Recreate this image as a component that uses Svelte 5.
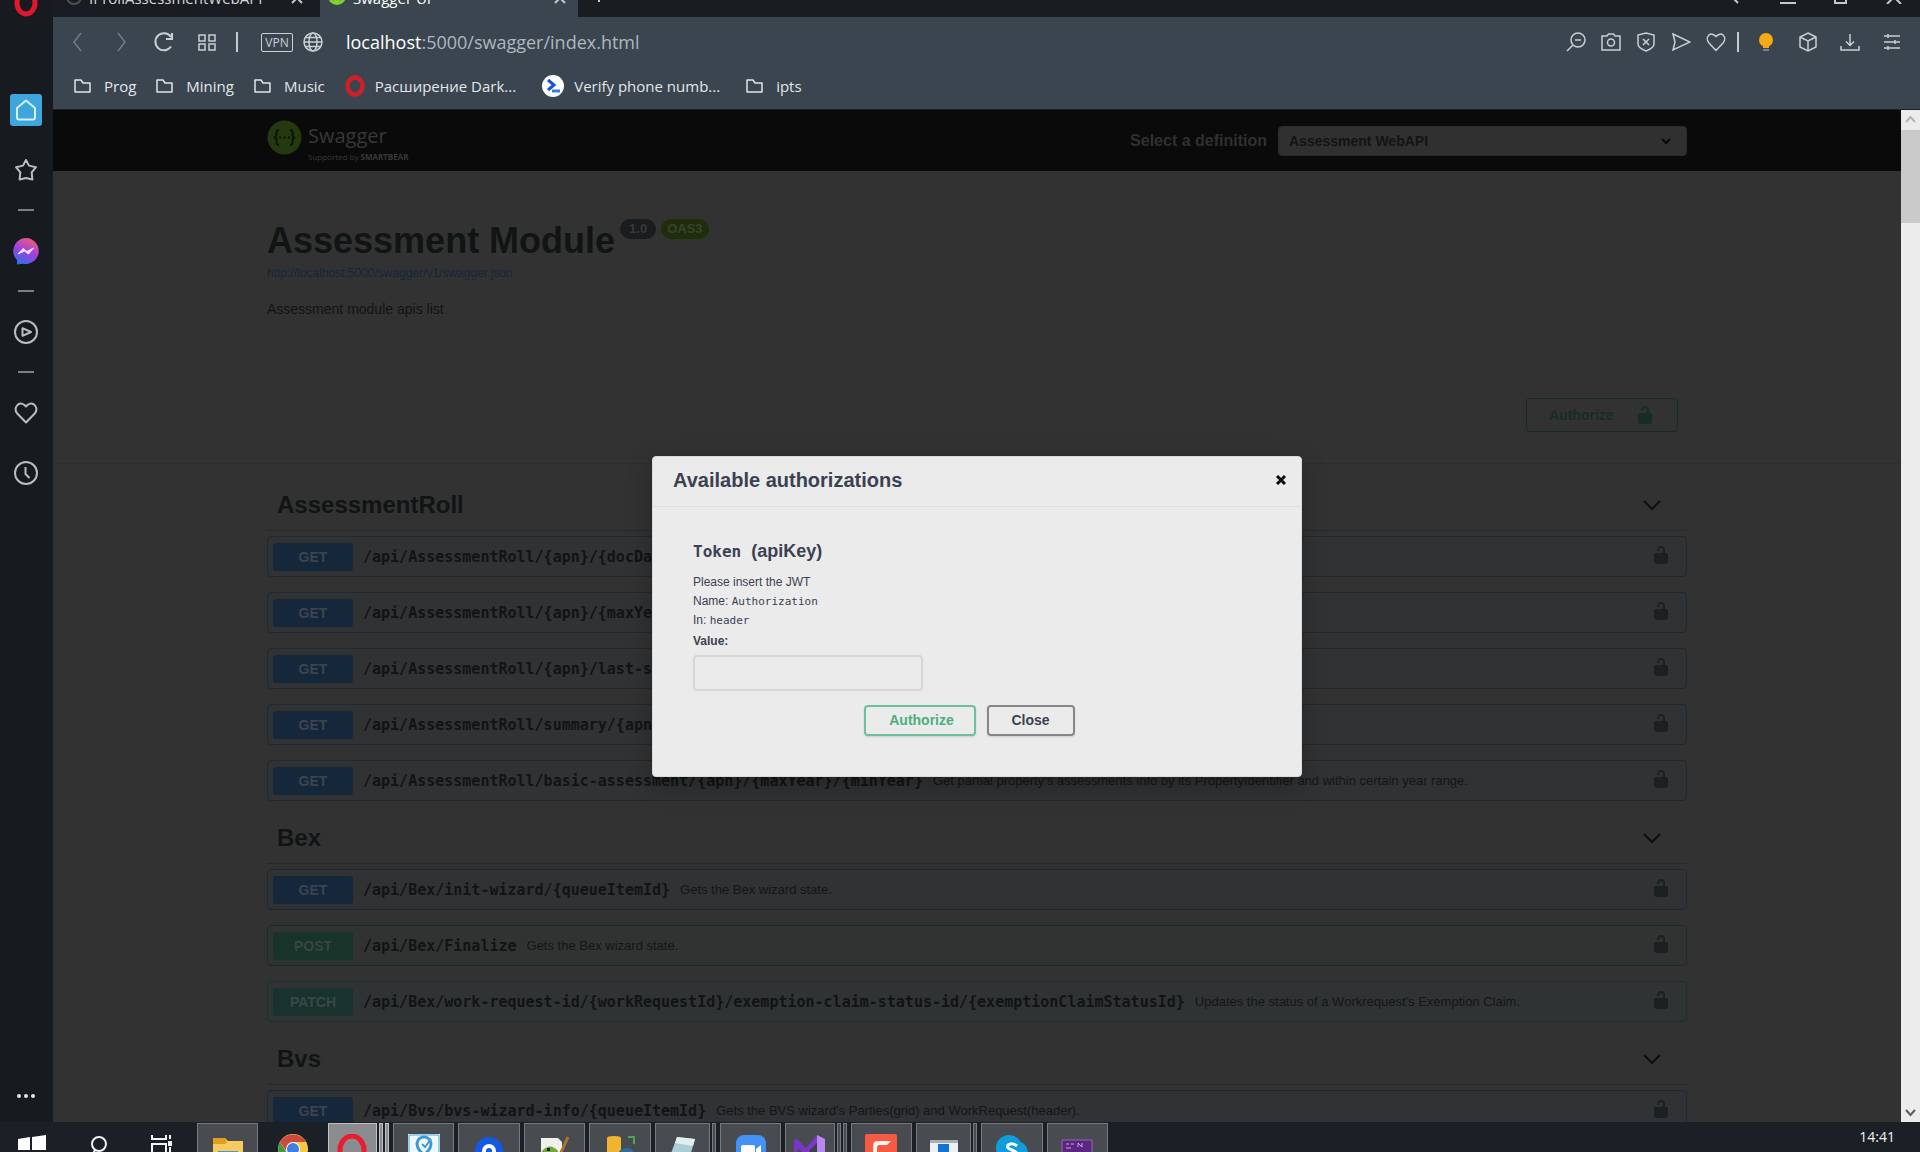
<script>
  const sections = [
    {
      name: 'AssessmentRoll',
      ops: [
        { method: 'get', path: '/api/AssessmentRoll/{apn}/{docDate}', text: '' },
        { method: 'get', path: '/api/AssessmentRoll/{apn}/{maxYear}', text: '' },
        { method: 'get', path: '/api/AssessmentRoll/{apn}/last-summary', text: '' },
        { method: 'get', path: '/api/AssessmentRoll/summary/{apn}', text: '' },
        {
          method: 'get',
          path: '/api/AssessmentRoll/basic-assessment/{apn}/{maxYear}/{minYear}',
          text: "Get partial property's assessments info by its PropertyIdentifier and within certain year range."
        }
      ]
    },
    {
      name: 'Bex',
      ops: [
        { method: 'get', path: '/api/Bex/init-wizard/{queueItemId}', text: 'Gets the Bex wizard state.' },
        { method: 'post', path: '/api/Bex/Finalize', text: 'Gets the Bex wizard state.' },
        {
          method: 'patch',
          path: '/api/Bex/work-request-id/{workRequestId}/exemption-claim-status-id/{exemptionClaimStatusId}',
          text: "Updates the status of a Workrequest's Exemption Claim."
        }
      ]
    },
    {
      name: 'Bvs',
      ops: [
        {
          method: 'get',
          path: '/api/Bvs/bvs-wizard-info/{queueItemId}',
          text: "Gets the BVS wizard's Parties(grid) and WorkRequest(header)."
        }
      ]
    }
  ];

  const bookmarks = [
    { icon: 'folder', label: 'Prog' },
    { icon: 'folder', label: 'Mining' },
    { icon: 'folder', label: 'Music' },
    { icon: 'opera', label: 'Расширение Dark...' },
    { icon: 'verify', label: 'Verify phone numb...' },
    { icon: 'folder', label: 'ipts' }
  ];

  const tasks = [
    { icon: 'explorer', kind: 'open' },
    { icon: 'chrome', kind: 'idle' },
    { icon: 'opera', kind: 'active', stack: 2 },
    { icon: 'map', kind: 'open' },
    { icon: 'disc', kind: 'open' },
    { icon: 'notepadpp', kind: 'open' },
    { icon: 'python', kind: 'open' },
    { icon: 'notepad', kind: 'open', stack: 1 },
    { icon: 'zoom', kind: 'open' },
    { icon: 'vs', kind: 'open', stack: 2 },
    { icon: 'camtasia', kind: 'open' },
    { icon: 'window', kind: 'open', stack: 1 },
    { icon: 'skype', kind: 'open' },
    { icon: 'console', kind: 'open' }
  ];

  let token = $state('');
</script>

{#snippet lock()}
  <svg class="lock" width="20" height="20" viewBox="0 0 20 20" aria-hidden="true">
    <path fill="currentColor" d="M15.8 8H14V5.6C14 2.703 12.665 1 10 1 7.334 1 6 2.703 6 5.6V6h2v-.801C8 3.754 8.797 3 10 3c1.203 0 2 .754 2 2.199V8H4c-.553 0-1 .646-1 1.199V17c0 .549.428 1.139.951 1.307l1.197.387C5.672 18.861 6.55 19 7.1 19h5.8c.549 0 1.428-.139 1.951-.307l1.196-.387c.524-.167.953-.757.953-1.306V9.199C17 8.646 16.352 8 15.8 8z" />
  </svg>
{/snippet}

<div class="shell">
  <aside class="rail">
    <div class="rail-logo">
      <svg width="28" height="28" viewBox="0 0 28 28" aria-label="Opera">
        <ellipse cx="14" cy="14" rx="9" ry="11" fill="none" stroke="#e0182d" stroke-width="5" />
      </svg>
    </div>
    <nav class="rail-nav" aria-label="Sidebar">
      <button class="slot home" aria-label="Home">
        <svg width="32" height="32" viewBox="0 0 32 32">
          <rect width="32" height="32" rx="3" fill="#3ea6dd" />
          <path d="M7 14 16 6.500l9 7.500v9.500q0 2-2 2H9q-2 0-2-2z" fill="none" stroke="#d6effb" stroke-width="2" stroke-linejoin="round" />
        </svg>
      </button>
      <button class="slot" aria-label="Favourites">
        <svg width="24" height="24" viewBox="0 0 24 24" class="line"><path d="m12 2 3 5.600 7 1.600-4.300 5.200.7 7.100-6.400-1.500-6.400 1.500.7-7.100L2 9.200l7-1.600z" /></svg>
      </button>
      <span class="dash"></span>
      <button class="slot" aria-label="Messenger">
        <svg width="28" height="28" viewBox="0 0 28 28">
          <defs>
            <linearGradient id="msg" x1="0.700" y1="0" x2="0.300" y2="1">
              <stop offset="0" stop-color="#ef5f78" /><stop offset="0.500" stop-color="#a33ee0" /><stop offset="1" stop-color="#2f6fe8" />
            </linearGradient>
          </defs>
          <path d="M14 1a13 13 0 1 1-3 25.700L5 27.500V23A13 13 0 0 1 14 1z" fill="url(#msg)" />
          <path d="m6 17 5-5.500 4 3 6.500-3.500-5 6-4-3z" fill="#e9ecff" stroke="#e9ecff" stroke-linejoin="round" />
        </svg>
      </button>
      <span class="dash"></span>
      <button class="slot" aria-label="Player">
        <svg width="24" height="24" viewBox="0 0 24 24" class="line"><circle cx="12" cy="12" r="11" /><path d="M8.500 8.200v7.600l8.500-3.800z" /></svg>
      </button>
      <span class="dash"></span>
      <button class="slot last" aria-label="Pinboards">
        <svg width="24" height="24" viewBox="0 0 24 24" class="line"><path d="M12 21.500 3.200 12.500C-1 7 4.500-.5 10.500 4L12 5.500 13.500 4c6-4.500 11.500 3 7.300 8.500z" /></svg>
      </button>
      <button class="slot" aria-label="History">
        <svg width="24" height="24" viewBox="0 0 24 24" class="line"><circle cx="12" cy="12" r="11" /><path d="M11.500 6v7l4 4" /></svg>
      </button>
    </nav>
    <button class="more" aria-label="More">
      <svg width="20" height="6" viewBox="0 0 20 6" fill="#e4e7ea"><circle cx="3" cy="3" r="2" /><circle cx="10" cy="3" r="2" /><circle cx="17" cy="3" r="2" /></svg>
    </button>
  </aside>

  <div class="browser">
    <div class="tabs">
      <div class="tab">
        <svg width="16" height="16" viewBox="0 0 16 16"><circle cx="8" cy="8" r="7" fill="none" stroke="#4b5057" stroke-width="2" /></svg>
        <span class="tab-label">IProllAssessmentWebAPI</span>
        <svg class="tab-x" width="14" height="14" viewBox="0 0 14 14"><path d="m2 2 10 10M12 2 2 12" /></svg>
      </div>
      <div class="tab current">
        <svg width="18" height="18" viewBox="0 0 18 18"><circle cx="9" cy="9" r="9" fill="#7fd030" /><path d="M6 5q-2 4 0 8M12 5q2 4 0 8M7 9h4" stroke="#31401f" stroke-width="2" fill="none" /></svg>
        <span class="tab-label">Swagger UI</span>
        <svg class="tab-x" width="14" height="14" viewBox="0 0 14 14"><path d="m2 2 10 10M12 2 2 12" /></svg>
      </div>
      <svg class="tab-x plus" width="14" height="14" viewBox="0 0 14 14"><path d="M7 1v12M1 7h12" /></svg>
      <div class="window-ctl">
        <svg width="14" height="14" viewBox="0 0 14 14"><path d="M10 13 4 7l6-6" /></svg>
        <svg width="16" height="14" viewBox="0 0 16 14"><path d="M0 13h16" /></svg>
        <svg width="14" height="14" viewBox="0 0 14 14"><path d="M1 1h11v12H1z" /></svg>
        <svg width="16" height="14" viewBox="0 0 16 14"><path d="m1 0 14 14M15 0 1 14" /></svg>
      </div>
    </div>

    <div class="toolbar">
      <div class="nav-icons">
        <svg class="dim" width="20" height="20" viewBox="0 0 20 20"><path d="M13 1 6 10l7 9" /></svg>
        <svg class="dim" width="20" height="20" viewBox="0 0 20 20"><path d="m7 1 7 9-7 9" /></svg>
        <svg width="20" height="20" viewBox="0 0 20 20"><path stroke-width="2" d="M17 14.500A8.500 8.500 0 1 1 17 5M18 1v6h-6" /></svg>
        <svg width="20" height="20" viewBox="0 0 20 20"><path d="M2 3h6v6H2zM12 3h6v6h-6zM2 12h6v6H2zM12 12h6v6h-6z" /></svg>
      </div>
      <span class="divider"></span>
      <span class="vpn">VPN</span>
      <svg width="20" height="20" viewBox="0 0 20 20"><circle cx="10" cy="10" r="9" /><ellipse cx="10" cy="10" rx="4" ry="9" /><path d="M1 10h18M2.500 5.500h15M2.500 14.500h15" /></svg>
      <div class="url"><span class="host">localhost</span>:5000/swagger/index.html</div>
      <div class="actions">
        <svg width="20" height="20" viewBox="0 0 20 20"><circle cx="12" cy="8" r="7" /><path d="M7 13 1 19M9 8h6" /></svg>
        <svg width="20" height="20" viewBox="0 0 20 20"><path d="M1 4h5l1.500-2h5L14 4h5v14H1z" /><circle cx="10" cy="10.500" r="3.500" /></svg>
        <svg width="20" height="20" viewBox="0 0 20 20"><path d="m10 1 8 2v9q0 4-8 7-8-3-8-7V3zM7 7l6 6M13 7l-6 6" /></svg>
        <svg width="20" height="20" viewBox="0 0 20 20"><path d="m2 2 17 8-17 8 2-8z" /></svg>
        <svg width="20" height="20" viewBox="0 0 20 20"><path d="m10 18.500-7-7.500C-2 5 5-1.500 10 4.500 15-1.500 22 5 17 11z" /></svg>
      </div>
      <span class="divider near"></span>
      <div class="extensions">
        <svg width="20" height="22" viewBox="0 0 20 22"><circle cx="10" cy="9" r="7" fill="#f5a912" stroke="none" /><path d="M7 14h6v3H7z" fill="#f5a912" stroke="none" /><path d="M7 18h6v2H7z" fill="#76828e" stroke="none" /></svg>
        <svg width="20" height="20" viewBox="0 0 20 20"><path d="m10 1 8 4v10l-8 4-8-4V5zM2 5l8 4 8-4M10 9v10" /></svg>
        <svg width="20" height="20" viewBox="0 0 20 20"><path d="M10 2v11M6 9.500l4 4 4-4M1 14v4h18v-4" /></svg>
        <svg width="20" height="20" viewBox="0 0 20 20"><path d="M2 4h16M2 10h16M2 16h16M6 2v4M13 8v4M6 14v4" /></svg>
      </div>
    </div>

    <nav class="bookmarks" aria-label="Bookmarks">
      {#each bookmarks as b}
        <a href="#bookmark" class="bookmark" class:wide={b.icon !== 'folder'}>
          {#if b.icon === 'folder'}
            <svg width="18" height="16" viewBox="0 0 18 16"><path d="M1 2h6l2 3h7v9H1z" fill="none" stroke="#e0e5ea" stroke-width="1.500" stroke-linejoin="round" /></svg>
          {:else if b.icon === 'opera'}
            <svg width="20" height="22" viewBox="0 0 20 22"><ellipse cx="10" cy="11" rx="7.500" ry="8.500" fill="none" stroke="#cf2029" stroke-width="4.500" /></svg>
          {:else}
            <svg width="22" height="22" viewBox="0 0 22 22"><circle cx="11" cy="11" r="11" fill="#fff" /><path d="m6 5 6 5-6 5" fill="none" stroke="#1a4fe0" stroke-width="3" /><path d="M10 16h8" stroke="#3b78f0" stroke-width="3" /></svg>
          {/if}
          <span>{b.label}</span>
        </a>
      {/each}
    </nav>

    <div class="viewport">
      <main class="page">
        <header class="topbar">
          <div class="wrap">
            <a class="brand" href="#top">
              <svg width="35" height="35" viewBox="0 0 35 35"><circle cx="17.500" cy="17.500" r="17" fill="#24390f" /><path d="M12 10q-3 0-2.500 3.500T7 17.500q3 .5 2.500 4T12 25M23 10q3 0 2.500 3.500t2.500 4q-3 .5-2.500 4T23 25" fill="none" stroke="#0c1406" stroke-width="2" /><path d="M12 17.500h2m2.500 0h2m2.500 0h2" stroke="#0c1406" stroke-width="2" /></svg>
              <span class="brand-text">
                <span class="brand-name">Swagger</span>
                <span class="brand-sub">Supported by <b>SMARTBEAR</b></span>
              </span>
            </a>
            <label class="picker">
              <span>Select a definition</span>
              <span class="select-box">
                <select><option>Assessment WebAPI</option></select>
                <svg width="12" height="12" viewBox="0 0 12 12"><path d="m2 4 4 4 4-4" fill="none" stroke="#090a0a" stroke-width="2" /></svg>
              </span>
            </label>
          </div>
        </header>

        <div class="wrap info">
          <h1>Assessment Module <span class="tag">1.0</span><span class="tag oas">OAS3</span></h1>
          <a class="spec" href="#spec">http://localhost:5000/swagger/v1/swagger.json</a>
          <p>Assessment module apis list</p>
        </div>
        <div class="scheme">
          <div class="wrap">
            <button class="auth-open">Authorize {@render lock()}</button>
          </div>
        </div>

        <div class="wrap">
          {#each sections as s}
            <section>
              <h2>
                {s.name}
                <svg width="20" height="20" viewBox="0 0 20 20"><path d="m2 6 8 8 8-8" fill="none" stroke="#0d0e10" stroke-width="2" /></svg>
              </h2>
              {#each s.ops as op}
                <div class="op {op.method}">
                  <button class="op-main">
                    <span class="method">{op.method.toUpperCase()}</span>
                    <span class="path">{op.path}</span>
                    <span class="desc">{op.text}</span>
                  </button>
                  <button class="op-lock" aria-label="Authorization for {op.path}">{@render lock()}</button>
                </div>
              {/each}
            </section>
          {/each}
        </div>
      </main>

      <div class="scrollbar" aria-hidden="true">
        <svg width="19" height="20" viewBox="0 0 19 20"><path d="m5 12 4.500-5 4.500 5" fill="none" stroke="#b4b4b4" stroke-width="2" /></svg>
        <span class="thumb"></span>
        <svg class="down" width="19" height="20" viewBox="0 0 19 20"><path d="m5 8 4.500 5L14 8" fill="none" stroke="#5c5c5c" stroke-width="2" /></svg>
      </div>

      <div class="overlay">
        <div class="dialog" role="dialog" aria-labelledby="dlg-title">
          <div class="dialog-head">
            <h3 id="dlg-title">Available authorizations</h3>
            <button class="x" aria-label="Close dialog">
              <svg width="10" height="10" viewBox="0 0 10 10"><path d="m1 1 8 8M9 1 1 9" stroke="#08090a" stroke-width="3" /></svg>
            </button>
          </div>
          <form class="dialog-body" onsubmit={(e) => e.preventDefault()}>
            <div class="scheme-info">
              <h4><code>Token</code> (apiKey)</h4>
              <p>Please insert the JWT</p>
              <p>Name: <code>Authorization</code></p>
              <p>In: <code>header</code></p>
              <label for="token">Value:</label>
              <input id="token" type="text" bind:value={token} />
            </div>
            <div class="buttons">
              <button class="btn go" type="submit">Authorize</button>
              <button class="btn done" type="button">Close</button>
            </div>
          </form>
        </div>
      </div>
    </div>
  </div>

  <footer class="taskbar">
    <div class="system">
      <svg width="28" height="30" viewBox="0 0 28 30"><path fill="#fff" d="m0 4 12-2v13H0zM14 2l14-2v15H14zM0 17h12v12L0 27zM14 17h14v13l-14-2z" /></svg>
      <svg width="18" height="26" viewBox="0 0 18 26"><circle cx="9" cy="9" r="7" fill="none" stroke="#f2f4f5" stroke-width="2" /><path d="m5 15-4 8" stroke="#f2f4f5" stroke-width="2" /></svg>
      <svg width="24" height="26" viewBox="0 0 24 26"><path d="M2 0v4h14V0M2 20V9h14v11M20 0v4M20 12v8" fill="none" stroke="#f2f4f5" stroke-width="2" /><path d="M18 6h4v5h-4z" fill="#f2f4f5" /></svg>
    </div>
    <div class="tasks">
      {#each tasks as t}
        <button class="task {t.kind}" aria-label={t.icon}>
          <span class="face">
            <svg width="32" height="32" viewBox="0 0 32 32">
              {#if t.icon === 'explorer'}
                <path d="M1 4h12l3 3h15v22H1z" fill="#f5cb62" /><path d="M1 4h12l2 4-2 2H1z" fill="#dda022" /><path d="M6 17h20v12H6z" fill="#3f9bd6" />
              {:else if t.icon === 'chrome'}
                <circle cx="16" cy="16" r="15" fill="#f7c846" /><path d="M3 9a15 15 0 0 1 26 0H16l-6 10z" fill="#cf4a3e" /><path d="m3 9 8 13 3 9A15 15 0 0 1 3 9z" fill="#3c9a4d" /><circle cx="16" cy="16" r="7" fill="#fff" /><circle cx="16" cy="16" r="6" fill="#3c7fe6" />
              {:else if t.icon === 'opera'}
                <ellipse cx="16" cy="16" rx="12" ry="14" fill="none" stroke="#ec1c2e" stroke-width="5" />
              {:else if t.icon === 'map'}
                <rect width="32" height="32" fill="#f0f7fb" /><path d="M1 1h30v30H1z" fill="none" stroke="#4aa7d8" stroke-width="1" /><path d="M16 21C4 11 10 3 16 3s12 8 0 18z" fill="none" stroke="#3b9ad0" stroke-width="3" /><path d="m14 10 3 3 6-8" fill="none" stroke="#3b9ad0" stroke-width="2" />
              {:else if t.icon === 'disc'}
                <circle cx="16" cy="17" r="14" fill="#1459e2" /><circle cx="16" cy="17" r="7" fill="#fff" /><circle cx="16" cy="17" r="3" fill="#1459e2" />
              {:else if t.icon === 'notepadpp'}
                <path d="M3 4h17l4 4v24H3z" fill="#f0f1ec" /><path d="M4 17q8-9 16 0v8H4z" fill="#71a83a" /><path d="M9 14h3v3H9z" fill="#202820" /><path d="m30 3-9 20" stroke="#a8742e" stroke-width="3" />
              {:else if t.icon === 'python'}
                <path d="M3 4q0-2 7-2t7 2v26H3z" fill="#f0b431" /><path d="M14 20q2-6 9-6t7 8v10H14z" fill="#2e6d98" /><path d="M24 3h6v7" fill="none" stroke="#4fa25d" stroke-width="2" />
              {:else if t.icon === 'notepad'}
                <path d="m11 3 18 2-7 24-19-4z" fill="#a8cfd5" /><path d="m11 3 18 2-2 7-18-3z" fill="#e3edec" />
              {:else if t.icon === 'zoom'}
                <rect x="1" y="1" width="30" height="30" rx="8" fill="#4492f6" /><rect x="6" y="11" width="14" height="12" rx="2" fill="#fff" /><path d="m21 15 5-4v12l-5-4z" fill="#fff" />
              {:else if t.icon === 'vs'}
                <path d="m23 1 8 4v24l-8 3L5 15l-2 2v12l-3-1V6l3-1 9 9z" fill="#7a35c9" /><path d="m23 1 8 4v24l-8 3z" fill="#b58af0" /><path d="m23 9-8 8 8 7z" fill="#3d3f45" />
              {:else if t.icon === 'camtasia'}
                <rect x="0" y="0" width="32" height="32" rx="2" fill="#f75a43" /><path d="M8 24V12q0-5 5-5h13l-4 4h-8q-2 0-2 3v10" fill="#fff2e8" />
              {:else if t.icon === 'window'}
                <path d="M2 6h28v24H2z" fill="#eef1f3" /><path d="M2 6h28v3H2z" fill="#a8b0b6" /><path d="M10 10h11v20H10z" fill="#1273d2" />
              {:else if t.icon === 'skype'}
                <circle cx="13" cy="14" r="13" fill="#0f9ddb" /><circle cx="20" cy="19" r="12" fill="#0f9ddb" /><path d="M21 12q-5-4-9-1c-3 5 9 5 9 9s-7 5-10 1" fill="none" stroke="#fff" stroke-width="3" />
              {:else}
                <path d="M1 6h30v22H1z" fill="#5d2583" stroke="#8f6bab" stroke-width="1" /><path d="M5 10h3m2 0h3m4 3v-4l4 4v-4M5 14h5" stroke="#c9a8e0" stroke-width="1" fill="none" />
              {/if}
            </svg>
          </span>
          {#each Array(t.stack ?? 0) as _}<span class="edge"></span>{/each}
        </button>
      {/each}
    </div>
    <time>14:41</time>
  </footer>
</div>

<style>
  :global(body) { background: #181b20; }
  * { box-sizing: border-box; }
  button { font: inherit; color: inherit; background: none; border: 0; padding: 0; cursor: pointer; }
  h1, h2, h3, h4, p { margin: 0; }
  svg { flex: none; }

  .shell {
    display: grid;
    grid-template: minmax(0, 1fr) 30px / 53px minmax(0, 1fr);
    height: 100vh;
    overflow: hidden;
    font-family: "Liberation Sans", Arial, sans-serif;
  }

  /* Sidebar */
  .rail { display: flex; flex-direction: column; align-items: center; padding-right: 1px; background: #171a1f; }
  .rail-logo { height: 17px; display: flex; align-items: flex-end; overflow: hidden; }
  .rail-nav { display: flex; flex-direction: column; align-items: center; padding-top: 72px; }
  .slot { display: flex; align-items: center; justify-content: center; width: 52px; height: 41px; }
  .home, .last { margin-bottom: 19px; }
  .line { fill: none; stroke: #b9bdc1; stroke-width: 2; stroke-linejoin: round; }
  .dash { width: 16px; height: 40px; background: linear-gradient(#7c8084, #7c8084) center / 16px 2px no-repeat; }
  .more { margin-top: auto; margin-bottom: 23px; display: flex; }

  /* Browser chrome */
  .browser { display: flex; flex-direction: column; min-width: 0; min-height: 0; font-family: "Open Sans", "Noto Sans", sans-serif; }
  .tabs { display: flex; height: 17px; flex: none; overflow: hidden; background: #191c21; color: #d5d8dc; }
  .tab { display: flex; align-items: flex-end; gap: 7px; width: 267px; padding: 0 16px 9px 13px; font-size: 15px; line-height: 20px; }
  .tab svg { margin-bottom: 3px; }
  .tab.current { width: 258px; background: #3a454f; color: #fff; padding-left: 8px; padding-right: 11px; }
  .tab-label { flex: 1; white-space: nowrap; }
  .tab-x, .window-ctl svg { fill: none; stroke: #c3c8cd; stroke-width: 2; }
  .plus { align-self: flex-end; margin: 0 0 14px 14px; }
  .window-ctl { display: flex; align-items: flex-end; gap: 38px; margin-left: auto; padding: 0 18px 13px 0; }

  .toolbar { display: flex; align-items: center; flex: none; height: 50px; padding: 0 18px 0 15px; background: #3a454f; }
  .toolbar svg { fill: none; stroke: #c9cfd5; stroke-width: 1.500; }
  .toolbar .dim { stroke: #707b85; }
  .nav-icons { display: flex; gap: 23px; }
  .divider { width: 2px; height: 20px; margin: 0 23px 0 19px; background: #c3cad0; }
  .vpn { margin-right: 10px; width: 32px; border: 1px solid #c9cfd5; border-radius: 2px; color: #c9cfd5; font-size: 12px; line-height: 17px; text-align: center; }
  .url { flex: 1; margin-left: 23px; color: #aeb7c0; font-size: 18px; line-height: 24px; white-space: nowrap; }
  .host { color: #fff; }
  .actions { display: flex; gap: 15px; }
  .near { margin: 0 17px 0 11px; }
  .extensions { display: flex; align-items: center; gap: 22px; }

  .bookmarks { display: flex; gap: 20px; flex: none; height: 43px; padding: 8px 20px 0 21px; background: #3a454f; border-bottom: 1px solid #1d2126; }
  .bookmark { display: flex; align-items: center; gap: 12px; height: 22px; color: #e2e6ea; font-size: 15px; line-height: 22px; text-decoration: none; white-space: nowrap; }
  .bookmark.wide { gap: 10px; margin-right: 6px; }

  /* Page */
  .viewport { position: relative; display: flex; flex: 1; min-height: 0; overflow: hidden; font-family: "Liberation Sans", Arial, sans-serif; }
  .page { flex: 1; min-width: 0; overflow: hidden; background: #323232; color: #111415; }
  .wrap { max-width: 1420px; margin: 0 auto; }
  .topbar { height: 61px; background: #0a0a0a; }
  .topbar .wrap { display: flex; align-items: center; justify-content: space-between; height: 61px; }
  .brand { display: flex; gap: 6px; color: #373838; text-decoration: none; }
  .brand-text { display: flex; flex-direction: column; gap: 1px; padding-top: 2px; }
  .brand-name { font: 20px/28px "Open Sans", sans-serif; }
  .brand-sub { font: 8px/11px "Open Sans", sans-serif; }
  .picker { display: flex; align-items: center; gap: 11px; color: #303030; font-size: 16px; font-weight: bold; }
  .select-box { display: flex; align-items: center; }
  .select-box svg { margin-left: -27px; margin-right: 15px; pointer-events: none; }
  select { appearance: none; width: 409px; height: 30px; padding: 0 10px; border: 1px solid #292b2c; border-radius: 4px; background: #303030; color: #121415; font: bold 14px/20px "Liberation Sans", Arial, sans-serif; }

  .info { padding-top: 48px; display: flex; flex-direction: column; align-items: flex-start; }
  h1 { display: flex; align-items: flex-start; gap: 5px; font-size: 36px; line-height: 44px; }
  .tag { padding: 0 9px; border-radius: 10px; background: #191d20; color: #37393a; font-size: 13px; line-height: 20px; }
  .oas { padding: 0 6px; background: #1f2d0a; color: #3a4130; }
  .spec { margin-top: 2px; color: #14263a; font-size: 12px; line-height: 16px; text-decoration: none; }
  .info p { margin-top: 18px; font-size: 14px; line-height: 20px; }
  .scheme { margin-bottom: 19px; padding: 79px 0 31px; border-bottom: 1px solid #2e2e2e; }
  .scheme .wrap { display: flex; justify-content: flex-end; padding-right: 9px; }
  .auth-open { display: flex; align-items: center; justify-content: space-between; width: 152px; height: 34px; padding: 0 22px; border: 1px solid #172b23; border-radius: 4px; color: #172d24; font-size: 14px; font-weight: bold; }

  h2 { display: flex; align-items: center; justify-content: space-between; height: 48px; margin-bottom: 5px; padding: 0 25px 4px 10px; border-bottom: 1px solid #282b2d; font-size: 24px; line-height: 30px; }
  .op { display: flex; align-items: center; height: 41px; margin-bottom: 15px; padding: 0 5px; border: 1px solid #1e2a33; border-radius: 4px; background: #303233; }
  .op-main { display: flex; flex: 1; align-items: center; gap: 10px; min-width: 0; text-align: left; white-space: nowrap; }
  .method { width: 80px; border-radius: 3px; background: #15273a; color: #3b454d; font-size: 14px; font-weight: bold; line-height: 28px; text-align: center; }
  .path { font: bold 15px/20px "DejaVu Sans Mono", monospace; }
  .desc { color: #131617; font-size: 13px; line-height: 20px; }
  .post { border-color: #1c2d28; background: #303332; }
  .post .method { background: #17332a; color: #37463f; }
  .patch { border-color: #1e2f2d; background: #303333; }
  .patch .method { background: #18332e; color: #384845; }
  .op-lock { display: flex; padding: 0 10px 3px 0; color: #1b2022; }

  .scrollbar { display: flex; flex-direction: column; flex: none; width: 19px; background: #ececec; }
  .thumb { height: 93px; background: #cacaca; }
  .down { margin-top: auto; }

  /* Dialog */
  .overlay { position: absolute; inset: 0 19px 0 0; display: flex; align-items: center; justify-content: center; }
  .dialog { width: 650px; border: 1px solid #dadada; border-radius: 4px; background: #ebebeb; box-shadow: 0 8px 24px #0004; color: #3b4151; }
  .dialog-head { display: flex; align-items: center; justify-content: space-between; height: 50px; padding: 0 15px 2px 20px; border-bottom: 1px solid #dedede; }
  h3 { font-size: 20px; line-height: 24px; }
  .x { display: flex; }
  .dialog-body { padding: 32px 20px 40px; }
  .scheme-info { display: flex; flex-direction: column; align-items: flex-start; padding: 0 20px; font-size: 12px; line-height: 19px; }
  h4 { margin-bottom: 9px; font-size: 18px; line-height: 24px; white-space: pre; }
  h4 code { margin-right: 5px; font-size: 16px; }
  code { font-family: "DejaVu Sans Mono", monospace; font-size: 11px; }
  label[for] { font-weight: bold; line-height: 22px; }
  input { width: 230px; height: 36px; margin-top: 3px; padding: 8px 10px; border: 2px solid #d6d6d6; border-radius: 4px; background: #ebebeb; font: 14px/20px "Liberation Sans", Arial, sans-serif; }
  .buttons { display: flex; justify-content: center; gap: 11px; margin-top: 14px; padding-right: 16px; }
  .btn { height: 31px; border: 2px solid #858789; border-radius: 4px; box-shadow: 0 1px 2px #0002; font-size: 14px; font-weight: bold; }
  .go { width: 112px; padding-left: 4px; border-color: #6dc09c; color: #49b07d; }
  .done { width: 88px; }

  /* Taskbar */
  .taskbar { grid-column: 1 / -1; display: flex; align-items: flex-start; height: 30px; overflow: hidden; background: #1b2026; }
  .system { display: flex; width: 197px; flex: none; gap: 42px; padding: 13px 0 0 18px; }
  .system svg:first-child { margin-right: 2px; }
  .tasks { display: flex; gap: 4px; width: 911px; padding-top: 1px; }
  .task { display: flex; flex: 1; gap: 2px; height: 48px; }
  .face { display: flex; flex: 1; justify-content: center; height: 48px; padding-top: 10px; overflow: hidden; }
  .open .face, .open .edge { background: #484c51; border: 1px solid #777b7f; border-bottom: 0; }
  .active .face, .active .edge { background: #8a8c8f; border: 1px solid #c0c2c4; border-bottom: 0; }
  .edge { width: 4px; height: 48px; }
  time { margin-left: auto; padding: 5px 25px 0 0; color: #f1f2f3; font: 14px/20px "Open Sans", sans-serif; }
</style>
